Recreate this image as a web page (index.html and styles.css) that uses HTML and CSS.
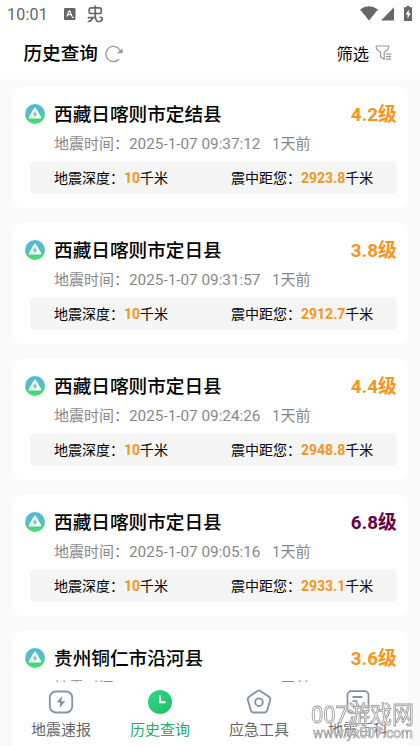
FILE: index.html
```html
<!DOCTYPE html>
<html lang="zh-CN">
<head>
<meta charset="utf-8">
<title>历史查询</title>
<link rel="stylesheet" href="styles.css">
</head>
<body>
<svg class="defs" width="0" height="0">
  <defs>
    <linearGradient id="quake-fill" x1="0" y1="0" x2="0" y2="1"><stop offset="0" stop-color="#5cb2e2"/><stop offset=".55" stop-color="#4fc4b4"/><stop offset=".75" stop-color="#43d77b"/><stop offset="1" stop-color="#43dc6d"/></linearGradient>
    <linearGradient id="clock-fill" x1="0" y1="0" x2="1" y2="1"><stop offset="0" stop-color="#2fd985"/><stop offset="1" stop-color="#20bd68"/></linearGradient>
    <symbol id="quake" viewBox="0 0 20 20"><circle cx="10" cy="10" r="10" fill="url(#quake-fill)"/><path d="M10 4.800 15.200 13.500H4.800Z" fill="#fff" stroke="#fff" stroke-width="2.200" stroke-linejoin="round"/><path d="M10.800 6.600 7.700 10.700H9.700L9.100 13.600 12.400 9.600H10.300Z" fill="#4fc0b2"/></symbol>
  </defs>
</svg>
<div class="app">
  <div class="status">
    <span class="clock">10:01</span>
    <svg class="s-app" width="12" height="12" viewBox="0 0 12 12"><rect width="11.500" height="12" rx="1.200" fill="#666"/><path d="M2.800 8.500 5 3h.8L8 8.500M3.700 6.600h3.400M8 9.300h2" fill="none" stroke="#fff" stroke-width="1.100"/></svg>
    <svg class="s-bug" width="17" height="18" viewBox="0 0 17 18"><path d="M8.300 1V12.500M4.500 2.900H12.500Q14.300 2.900 14.300 4.600V6.800Q14.300 8.500 12.500 8.500H4Q2.200 8.500 2.200 6.800V4.600Q2.200 2.900 4 2.900ZM1.500 12.600H7.500Q9 12.600 9 14.200 9.200 16.500 12 16.500 15.300 16.300 15.300 13.700 15 12 13.200 12.300M1.500 16.500Q4.500 16.300 5.300 13" fill="none" stroke="#666" stroke-width="1.700" stroke-linejoin="round" stroke-linecap="round"/></svg>
    <span class="grow"></span>
    <svg width="56" height="16" viewBox="0 0 56 16"><path d="M0 3.500Q9 -2.800 18 3.500L9 14.500Z" fill="#666"/><path d="M34 1.300V14.500H21Z" fill="#666"/><path d="M46.500 0h3v1.300H52V15H44V1.300h2.500Z" fill="#666"/><path d="M48.800 3.500 45.600 8.500h2v4L50.800 7.300h-2Z" fill="#fff"/></svg>
  </div>
  <div class="header">
    <h1>历史查询</h1>
    <svg class="refresh" width="18" height="18" viewBox="0 0 18 18"><path d="M15.200 5.500A7.600 7.600 0 1 0 14.200 14" fill="none" stroke="#999" stroke-width="1.300"/><path d="M17.600 3.200V8.200H12Z" fill="#999"/></svg>
    <span class="grow"></span>
    <span class="filter">筛选</span>
    <svg class="funnel" width="18" height="16" viewBox="0 0 18 16"><path d="M1.200 1H13.800Q14.300 3 12.500 4.800L9.200 7.500V14.300L5.600 12V7.300L2.300 4.800Q.8 3 1.200 1Z" fill="none" stroke="#999" stroke-width="1.200" stroke-linejoin="round"/><path d="M11 9.200h5.200M11 11.700h5.200M11 14.200h5.200" stroke="#999" stroke-width="1.200"/></svg>
  </div>
  <div class="list">
    <div class="card">
      <div class="top"><svg class="mark"><use href="#quake"/></svg><h2>西藏日喀则市定结县</h2><span class="level">4.2级</span></div>
      <div class="time">地震时间：<span class="date">2025-1-07 09:37:12</span><span>1天前</span></div>
      <div class="info"><span class="depth">地震深度：<b>10</b>千米</span><span>震中距您：<b>2923.8</b>千米</span></div>
    </div>
    <div class="card">
      <div class="top"><svg class="mark"><use href="#quake"/></svg><h2>西藏日喀则市定日县</h2><span class="level">3.8级</span></div>
      <div class="time">地震时间：<span class="date">2025-1-07 09:31:57</span><span>1天前</span></div>
      <div class="info"><span class="depth">地震深度：<b>10</b>千米</span><span>震中距您：<b>2912.7</b>千米</span></div>
    </div>
    <div class="card">
      <div class="top"><svg class="mark"><use href="#quake"/></svg><h2>西藏日喀则市定日县</h2><span class="level">4.4级</span></div>
      <div class="time">地震时间：<span class="date">2025-1-07 09:24:26</span><span>1天前</span></div>
      <div class="info"><span class="depth">地震深度：<b>10</b>千米</span><span>震中距您：<b>2948.8</b>千米</span></div>
    </div>
    <div class="card">
      <div class="top"><svg class="mark"><use href="#quake"/></svg><h2>西藏日喀则市定日县</h2><span class="level strong">6.8级</span></div>
      <div class="time">地震时间：<span class="date">2025-1-07 09:05:16</span><span>1天前</span></div>
      <div class="info"><span class="depth">地震深度：<b>10</b>千米</span><span>震中距您：<b>2933.1</b>千米</span></div>
    </div>
    <div class="card">
      <div class="top"><svg class="mark"><use href="#quake"/></svg><h2>贵州铜仁市沿河县</h2><span class="level">3.6级</span></div>
      <div class="time">地震时间：<span class="date">2025-1-07 09:01:22</span><span>1天前</span></div>
    </div>
  </div>
  <div class="tabs">
    <div class="tab"><svg width="26" height="26" viewBox="0 0 26 26"><rect x="1.800" y="2.500" width="22.400" height="21" rx="6" fill="none" stroke="#8591a9" stroke-width="1.800"/><path d="M14 7 8.600 13.500h3.600L11.600 19 17.300 12.200H13.500Z" fill="#8591a9"/></svg><span>地震速报</span></div>
    <div class="tab active"><svg width="26" height="26" viewBox="0 0 26 26"><circle cx="13" cy="13" r="12" fill="url(#clock-fill)"/><path d="M13 6.500V13.200H18.500" fill="none" stroke="#fff" stroke-width="2"/></svg><span>历史查询</span></div>
    <div class="tab"><svg width="26" height="26" viewBox="0 0 26 26"><path d="M11.500 1.900Q13 .9 14.500 1.900L23.200 8Q24.700 9.200 24.200 11L21 21.700Q20.500 23.500 18.600 23.500H7.400Q5.500 23.500 5 21.700L1.800 11Q1.300 9.200 2.800 8Z" fill="none" stroke="#8591a9" stroke-width="1.800"/><circle cx="13" cy="13.200" r="3.800" fill="none" stroke="#8591a9" stroke-width="1.900"/></svg><span>应急工具</span></div>
    <div class="tab"><svg width="26" height="26" viewBox="0 0 26 26"><rect x="2.500" y="2.200" width="21" height="22" rx="4" fill="none" stroke="#8591a9" stroke-width="1.800"/><path d="M7.500 8h10M7.500 12.200h5" stroke="#8591a9" stroke-width="1.800"/></svg><span>地震百科</span></div>
  </div>
  <svg class="watermark" width="112" height="46" viewBox="0 0 112 46"><text class="site" x="3" y="23" textLength="103" lengthAdjust="spacingAndGlyphs">007游戏网</text><text class="url" x="5" y="38" textLength="100" lengthAdjust="spacingAndGlyphs">www.yx007.com</text></svg>
</div>
</body>
</html>
```

FILE: styles.css
```css
* { box-sizing: border-box; margin: 0; padding: 0; }
body { font-family: Roboto, "Noto Sans CJK SC", sans-serif; background: #fff; color: #000; overflow: hidden; }
svg { display: block; flex: none; }
.defs { position: absolute; }
.app { position: relative; width: 420px; height: 746px; display: flex; flex-direction: column; overflow: hidden; background: linear-gradient(#fff 79px, #fafafa 79px); }
.grow { flex: 1; }
.status { height: 28px; display: flex; align-items: center; padding: 0 4px 0 7px; color: #666; }
.clock { font-size: 16px; width: 57px; letter-spacing: .25px; padding-top: 1px; }
.s-bug { margin-left: 11px; }
.header { height: 51px; display: flex; align-items: center; padding: 0 27px 0 23.500px; }
h1 { font-size: 18.600px; font-weight: 500; line-height: 26px; }
.refresh { margin-left: 7.500px; }
.filter { font-size: 16.300px; margin-right: 6px; padding-bottom: 2px; }
.funnel { margin-bottom: 1px; }
.list { height: 603px; padding: 8px 12px 0; background: #fafafa; overflow: hidden; display: flex; flex-direction: column; gap: 15px; }
.card { flex: none; height: 121px; padding: 14px 11px 14px 13px; background: #fff; border-radius: 10px; }
.top { display: flex; align-items: center; height: 27px; }
.mark { width: 20px; height: 20px; margin-right: 9px; margin-bottom: 1px; }
h2 { flex: 1; font-size: 18.650px; font-weight: 500; line-height: 27px; white-space: nowrap; padding-top: 2px; }
.level { font-size: 18.800px; font-weight: 700; line-height: 27px; padding-top: 2px; letter-spacing: .1px; color: #f7931e; }
.level.strong { color: #660044; }
.time { margin-left: 29px; height: 33px; line-height: 33px; font-size: 15px; color: #888; white-space: nowrap; }
.date { display: inline-block; width: 143px; font-size: 15.300px; }
.info { display: flex; align-items: center; height: 33px; margin-left: 5px; padding: 0 0 2px 24px; border-radius: 5px; background: #f5f5f5; font-size: 14px; white-space: nowrap; }
.depth { width: 177px; }
.info b { color: #f7931e; font-weight: 700; }
.tabs { flex: 1; display: flex; padding: 7px 0 0; margin: 0 12px; background: #fff; }
.tab { flex: 1; display: flex; flex-direction: column; align-items: center; gap: 4px; font-size: 15px; line-height: 22px; color: #666; }
.tab svg { margin-right: 1px; }
.tab span { margin-right: 1px; }
.tab.active { color: #24ac68; }
.watermark { position: absolute; left: 308px; top: 700px; filter: drop-shadow(0 0 1px #fff); }
.watermark text { fill: rgba(255,255,255,.65); stroke: #999; }
.site { font: 400 24px Roboto, "Noto Sans CJK SC", sans-serif; stroke-width: .9px; }
.url { font: 400 14px Roboto, sans-serif; stroke-width: .7px; }
```
